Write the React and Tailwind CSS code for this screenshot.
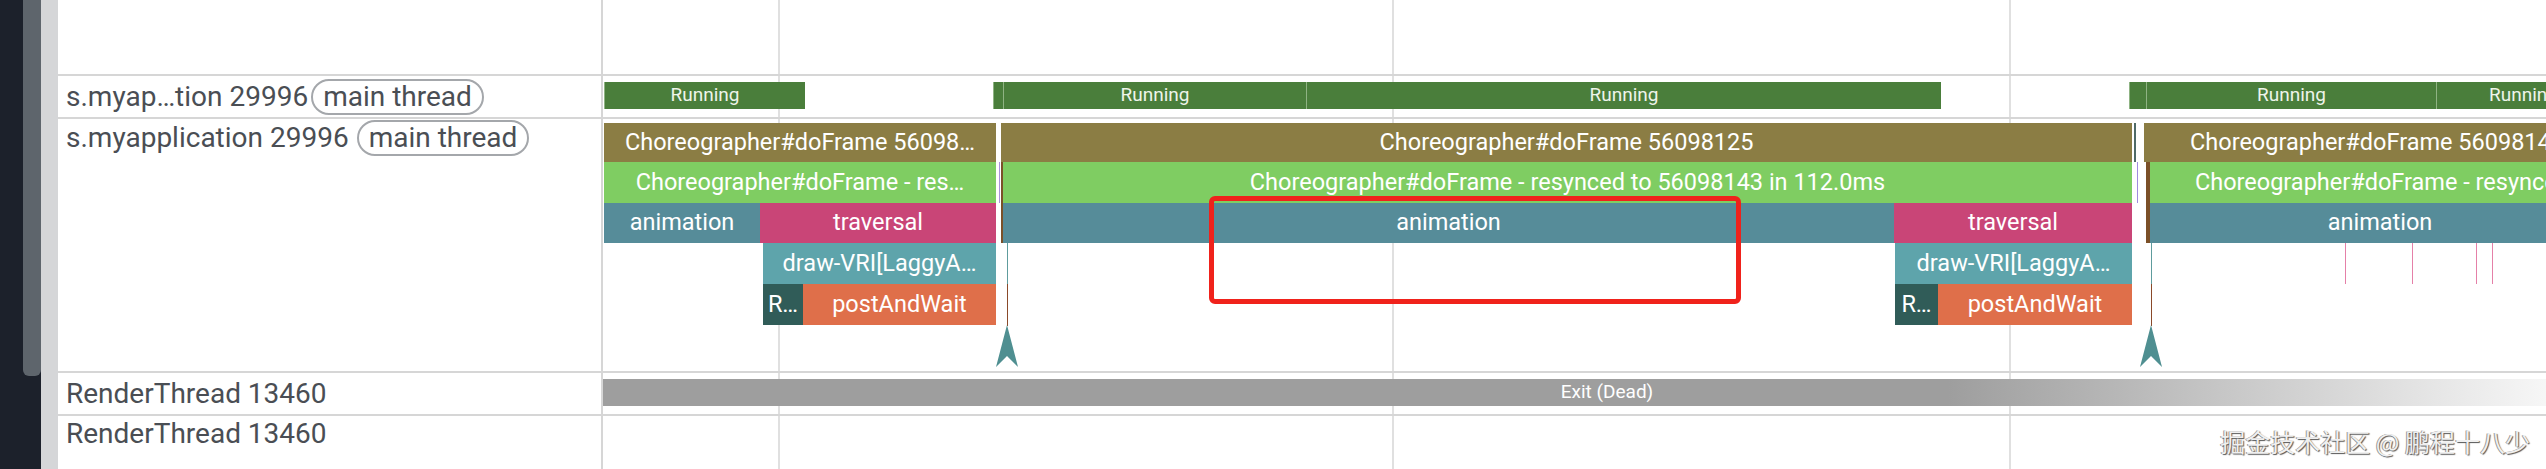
import React from 'react';

const GRID = [175, 789, 1406];

const running = [
  { left: 1, width: 201, text: 'Running' },
  { left: 390, width: 10, text: '' },
  { left: 400, width: 303, text: 'Running' },
  { left: 703, width: 635, text: 'Running' },
  { left: 1526, width: 17, text: '' },
  { left: 1543, width: 290, text: 'Running' },
  { left: 1833, width: 174, text: 'Running' },
];

const DEPTH_TOP = [4, 43, 84, 124, 165];
const DEPTH_H = [39, 41, 40, 41, 41];

const slices = [
  // depth 0
  { d: 0, left: 1, width: 392, cls: 'bg-[#8b7d44]', text: 'Choreographer#doFrame 56098…' },
  { d: 0, left: 398, width: 1131, cls: 'bg-[#8b7d44]', text: 'Choreographer#doFrame 56098125' },
  { d: 0, left: 1531, width: 2, cls: 'bg-[#4f6a68]', text: '' },
  { d: 0, left: 1541, width: 466, cls: 'bg-[#8b7d44]', text: 'Choreographer#doFrame 56098143' },
  // depth 1
  { d: 1, left: 1, width: 392, cls: 'bg-[#7fcd62]', text: 'Choreographer#doFrame - res…' },
  { d: 1, left: 396, width: 1, cls: 'bg-[#a994dc]', text: '' },
  { d: 1, left: 398, width: 2, cls: 'bg-[#7b5028]', text: '' },
  { d: 1, left: 400, width: 1129, cls: 'bg-[#7fcd62]', text: 'Choreographer#doFrame - resynced to 56098143 in 112.0ms' },
  { d: 1, left: 1534, width: 1, cls: 'bg-[#a08be0]', text: '' },
  { d: 1, left: 1543, width: 4, cls: 'bg-[#7b5028]', text: '' },
  { d: 1, left: 1547, width: 712, cls: 'bg-[#7fcd62]', text: 'Choreographer#doFrame - resynced to 56098161 in 96.0ms' },
  // depth 2
  { d: 2, left: 1, width: 156, cls: 'bg-[#568c99]', text: 'animation' },
  { d: 2, left: 157, width: 236, cls: 'bg-[#c94577]', text: 'traversal' },
  { d: 2, left: 398, width: 2, cls: 'bg-[#7b5028]', text: '' },
  { d: 2, left: 400, width: 891, cls: 'bg-[#568c99]', text: 'animation' },
  { d: 2, left: 1291, width: 238, cls: 'bg-[#c94577]', text: 'traversal' },
  { d: 2, left: 1543, width: 4, cls: 'bg-[#7b5028]', text: '' },
  { d: 2, left: 1547, width: 460, cls: 'bg-[#568c99]', text: 'animation' },
  // depth 3
  { d: 3, left: 160, width: 233, cls: 'bg-[#5ea4ab]', text: 'draw-VRI[LaggyA…' },
  { d: 3, left: 1292, width: 237, cls: 'bg-[#5ea4ab]', text: 'draw-VRI[LaggyA…' },
  { d: 3, left: 1742, width: 1, cls: 'bg-[#e580a8]', text: '' },
  { d: 3, left: 1809, width: 1, cls: 'bg-[#e580a8]', text: '' },
  { d: 3, left: 1873, width: 1, cls: 'bg-[#e580a8]', text: '' },
  { d: 3, left: 1889, width: 1, cls: 'bg-[#e580a8]', text: '' },
  // depth 4
  { d: 4, left: 160, width: 40, cls: 'bg-[#305c58]', text: 'R…' },
  { d: 4, left: 200, width: 193, cls: 'bg-[#df6f4a]', text: 'postAndWait' },
  { d: 4, left: 1292, width: 43, cls: 'bg-[#305c58]', text: 'R…' },
  { d: 4, left: 1335, width: 194, cls: 'bg-[#df6f4a]', text: 'postAndWait' },
];

const Grid = () =>
  GRID.map((x) => (
    <div key={x} className="absolute top-0 bottom-0 w-[2px] bg-[#e0e0e0]" style={{ left: x }} />
  ));

const Pill = () => (
  <span className="inline-flex items-center h-[36px] px-[10px] rounded-full border-2 border-[#a4a7ab] leading-none">
    main thread
  </span>
);

const Marker = ({ x }) => (
  <>
    <div className="absolute w-[1px] bg-[#5e9c9d]" style={{ left: x, top: 124, height: 41 }} />
    <div className="absolute w-[1px] bg-[#8a4a2a]" style={{ left: x, top: 165, height: 42 }} />
    <svg className="absolute" style={{ left: x - 11, top: 206 }} width="22" height="42" viewBox="0 0 22 42">
      <polygon points="11,0 22,42 11,31 0,42" fill="#4f8f91" />
    </svg>
  </>
);

const Label = ({ children, className = '' }) => (
  <div className={`w-[545px] shrink-0 border-r-2 border-[#d6d6d6] pl-[8px] flex text-[28px] font-normal text-[#4a4e54] whitespace-nowrap ${className}`}>
    {children}
  </div>
);

export default function App() {
  return (
    <div className="relative flex w-[2546px] h-[469px] overflow-hidden bg-white font-[Roboto,sans-serif]">
      <div className="w-[23px] shrink-0 bg-[#1c212b]" />
      <div className="w-[18px] shrink-0 bg-[#1c212b] flex flex-col">
        <div className="h-[376px] bg-[#5e656c] rounded-b-[6px]" />
      </div>
      <div className="w-[17px] shrink-0 bg-[#d5d6d8]" />

      <div className="flex-1 flex flex-col">
        {/* top empty row */}
        <div className="flex h-[76px] border-b-2 border-[#d6d6d6]">
          <Label />
          <div className="relative flex-1 overflow-hidden">
            <Grid />
          </div>
        </div>

        {/* thread state row */}
        <div className="flex h-[43px] border-b-2 border-[#d6d6d6]">
          <Label className="items-center">
            <span className="mr-[3px]">s.myap…tion 29996</span>
            <Pill />
          </Label>
          <div className="relative flex-1 overflow-hidden">
            <Grid />
            {running.map((r, i) => (
              <div
                key={i}
                className="absolute top-[6px] h-[27px] bg-[#4a7e3b] border-l border-[#8fb383] flex items-center justify-center overflow-hidden whitespace-nowrap text-[19px] text-[#eef4ea]"
                style={{ left: r.left, width: r.width }}
              >
                {r.text}
              </div>
            ))}
          </div>
        </div>

        {/* main thread slices */}
        <div className="flex h-[254px] border-b-2 border-[#d6d6d6]">
          <Label className="items-start">
            <div className="flex items-center h-[38px]">
              <span className="mr-[8px]">s.myapplication 29996</span>
              <Pill />
            </div>
          </Label>
          <div className="relative flex-1 overflow-hidden">
            <Grid />
            {slices.map((s, i) => (
              <div
                key={i}
                className={`absolute flex items-center justify-center overflow-hidden whitespace-nowrap text-[23.5px] text-white ${s.cls}`}
                style={{ left: s.left, width: s.width, top: DEPTH_TOP[s.d], height: DEPTH_H[s.d] }}
              >
                {s.text}
              </div>
            ))}
            <Marker x={404} />
            <Marker x={1548} />
            <div className="absolute left-[606px] top-[77px] w-[532px] h-[108px] border-[5px] border-[#f0221b] rounded-[6px]" />
          </div>
        </div>

        {/* RenderThread dead */}
        <div className="flex h-[43px] border-b-2 border-[#d6d6d6]">
          <Label className="items-center">RenderThread 13460</Label>
          <div className="relative flex-1 overflow-hidden">
            <Grid />
            <div className="absolute left-0 top-[6px] h-[27px] w-[2008px] bg-[linear-gradient(to_right,#9e9e9e_67%,#f7f7f7_97%)] flex items-center justify-center text-[19px] text-white">
              Exit (Dead)
            </div>
          </div>
        </div>

        {/* RenderThread */}
        <div className="flex flex-1">
          <Label className="items-start">
            <div className="h-[36px] flex items-center">RenderThread 13460</div>
          </Label>
          <div className="relative flex-1 overflow-hidden">
            <Grid />
          </div>
        </div>
      </div>

      <div className="absolute right-[16px] top-[423px] text-[25px] text-[#f0f0f0] font-['Noto_Sans_CJK_SC',sans-serif] [text-shadow:1px_1px_1px_#555,-1px_0_0_#999]">
        掘金技术社区 @ 鹏程十八少
      </div>
    </div>
  );
}
